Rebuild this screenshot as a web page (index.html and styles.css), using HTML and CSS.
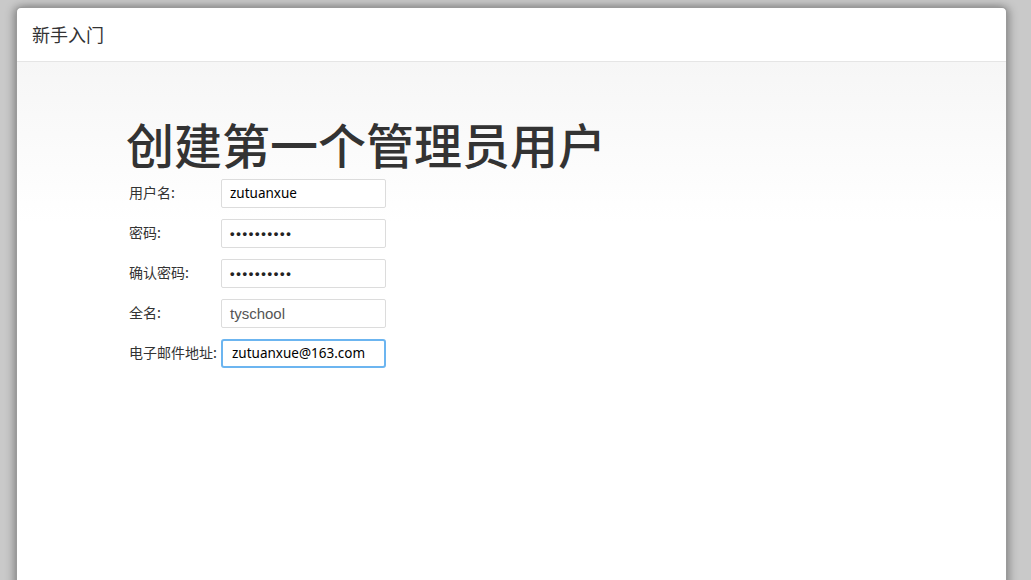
FILE: index.html
```html
<!DOCTYPE html>
<html lang="zh-CN">
<head>
<meta charset="utf-8">
<title>新手入门</title>
<link rel="stylesheet" href="styles.css">
</head>
<body>
<div class="window">
  <div class="win-header">新手入门</div>
  <div class="win-body">
    <h1 class="title">创建第一个管理员用户</h1>
    <form class="form">
      <div class="row">
        <label class="label">用户名:</label>
        <div class="field f-sys">zutuanxue</div>
      </div>
      <div class="row">
        <label class="label">密码:</label>
        <div class="field f-dots">••••••••••</div>
      </div>
      <div class="row">
        <label class="label">确认密码:</label>
        <div class="field f-dots">••••••••••</div>
      </div>
      <div class="row">
        <label class="label">全名:</label>
        <div class="field f-grey">tyschool</div>
      </div>
      <div class="row">
        <label class="label">电子邮件地址:</label>
        <div class="field f-sys focus">zutuanxue@163.com</div>
      </div>
    </form>
  </div>
</div>
</body>
</html>
```

FILE: styles.css
```css
html, body {
  margin: 0;
  padding: 0;
  height: 100%;
  overflow: hidden;
}
body {
  background: #c9c9c9;
  font-family: "Noto Sans CJK SC", "Noto Sans", sans-serif;
  color: #333;
}
.window {
  margin: 7px 0 0 16px;
  width: 991px;
  height: 640px;
  background: #fff;
  border-radius: 5px 5px 0 0;
  border: 1px solid #9a9a9a;
  border-bottom: none;
  box-sizing: border-box;
  box-shadow: -3px 0 8px rgba(0,0,0,0.25), 3px 0 8px rgba(0,0,0,0.25);
  display: flex;
  flex-direction: column;
}
.win-header {
  height: 53px;
  flex: none;
  border-bottom: 1px solid #e5e5e5;
  padding-left: 15px;
  font-size: 18px;
  line-height: 53px;
  color: #333;
}
.win-body {
  flex: 1;
  background: linear-gradient(to bottom, #f6f6f6 0px, #ffffff 160px);
  padding: 50px 0 0 109px;
}
.title {
  margin: 0 0 5px;
  font-size: 48px;
  font-weight: 500;
  line-height: 62px;
  color: #333;
}
.form {
  display: flex;
  flex-direction: column;
  gap: 11px;
  margin-top: 0;
  padding-left: 3px;
}
.row {
  display: flex;
  align-items: center;
  height: 29px;
}
.label {
  width: 92px;
  flex: none;
  font-size: 14px;
  color: #333;
  line-height: 20px;
  margin-top: -3px;
}
.field {
  width: 165px;
  height: 29px;
  box-sizing: border-box;
  border: 1px solid #dcdcdc;
  border-radius: 2px;
  background: #fff;
  padding: 0 8px;
  font-size: 14px;
  line-height: 27px;
  white-space: nowrap;
  overflow: hidden;
}
.f-sys {
  font-family: "Noto Sans", sans-serif;
  font-size: 13.5px;
  color: #000;
}
.f-grey {
  font-family: "Liberation Sans", sans-serif;
  font-size: 15px;
  color: #555;
}
.f-dots {
  font-family: "Liberation Sans", sans-serif;
  font-size: 13px;
  letter-spacing: 1.7px;
  color: #222;
  font-weight: bold;
}
.focus {
  border: 2px solid #6cb5f0;
  border-radius: 3px;
  padding: 0 9px;
  line-height: 25px;
}
```
